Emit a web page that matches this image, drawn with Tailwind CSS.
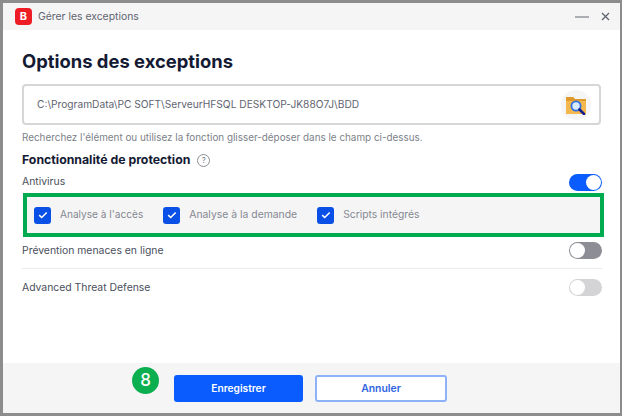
<!DOCTYPE html>
<html lang="fr">
<head>
  <meta charset="UTF-8">
  <title>Gérer les exceptions</title>
  <script src="https://cdn.jsdelivr.net/npm/@tailwindcss/browser@4"></script>
</head>
<body class="bg-white">
  <main class="w-[624px] h-[417px] pr-[2px] pb-px font-['Inter',sans-serif]">
    <div class="relative h-full flex flex-col border-[3px] border-r-2 border-[#8c8c8c] bg-white">

      <!-- title bar -->
      <div class="h-[27px] shrink-0 flex items-center bg-[#f5f5f5] pl-3 pr-[10px]">
        <div class="w-[17px] h-[17px] rounded-[4px] bg-[#ee1c25] flex items-center justify-center text-white text-[11px] font-bold leading-none">B</div>
        <span class="ml-[6px] text-[10.4px] text-[#5f6470]">Gérer les exceptions</span>
        <svg class="ml-auto" width="14" height="10" viewBox="0 0 14 10"><path d="M0 5h14" stroke="#7b7f88" stroke-width="1.2"/></svg>
        <svg class="ml-[12px]" width="9" height="9" viewBox="0 0 9 9"><path d="M1 1l7 7M8 1l-7 7" stroke="#5f6470" stroke-width="1.3"/></svg>
      </div>

      <!-- content -->
      <div class="flex-1 pl-[19px] pr-[18px] pt-[18px]">
        <h1 class="text-[18.4px] leading-[26px] font-bold text-[#141a33]">Options des exceptions</h1>

        <div class="mt-[10px] mr-px h-[41px] flex items-center justify-between border-2 border-[#d6d6d6] rounded-[4px] pl-[13px] pr-[8px]">
          <span class="text-[10.2px] text-[#5f6470]">C:\ProgramData\PC SOFT\ServeurHFSQL DESKTOP-JK88O7J\BDD</span>
          <div class="w-[30px] h-[30px] rounded-full bg-[#f5f5f5] flex items-center justify-center">
            <svg width="22" height="20" viewBox="0 0 22 20">
              <path d="M1 2h7l2 2h11v15H1z" fill="#f5b84c"/>
              <path d="M1 2h7l2 2h11v2H1z" fill="#e09a2c"/>
              <circle cx="11" cy="11" r="4.6" fill="#d8ecff" stroke="#2f6fe0" stroke-width="1.8"/>
              <path d="M14.5 14.5l4.5 4.5" stroke="#16208c" stroke-width="2.6" stroke-linecap="round"/>
            </svg>
          </div>
        </div>

        <p class="mt-[6px] text-[9.9px] leading-[13px] text-[#7b7f88] whitespace-nowrap">Recherchez l'élément ou utilisez la fonction glisser-déposer dans le champ ci-dessus.</p>

        <div class="mt-[9px] flex items-center gap-[7px]">
          <h2 class="text-[12.3px] leading-[14px] font-bold text-[#141a33]">Fonctionnalité de protection</h2>
          <div class="w-[13px] h-[13px] rounded-full border border-[#8c8f96] flex items-center justify-center text-[8px] leading-none text-[#7b7f88]">?</div>
        </div>

        <div class="mt-[6px] h-[18px] flex items-center justify-between">
          <span class="text-[10.4px] text-[#4a4f5c]">Antivirus</span>
          <div class="w-[33px] h-[17px] rounded-full bg-[#0a5cff] flex items-center justify-end pr-px">
            <div class="w-[15px] h-[15px] rounded-full bg-white"></div>
          </div>
        </div>

        <!-- annotated row -->
        <div class="mt-[2px] ml-px -mr-[2px] h-[44px] flex items-center gap-[20px] border-[4px] border-[#00ab4f] bg-[#f5f5f5] pl-[7px]">
          <label class="flex items-center gap-[9px]">
            <span class="w-[17px] h-[17px] rounded-[3px] bg-[#0a4fe6] flex items-center justify-center">
              <svg width="10" height="8" viewBox="0 0 10 8"><path d="M1.2 4.2l2.5 2.3 5-5" fill="none" stroke="white" stroke-width="1.6"/></svg>
            </span>
            <span class="text-[10.1px] text-[#858892]">Analyse à l'accès</span>
          </label>
          <label class="flex items-center gap-[9px]">
            <span class="w-[17px] h-[17px] rounded-[3px] bg-[#0a4fe6] flex items-center justify-center">
              <svg width="10" height="8" viewBox="0 0 10 8"><path d="M1.2 4.2l2.5 2.3 5-5" fill="none" stroke="white" stroke-width="1.6"/></svg>
            </span>
            <span class="text-[10.4px] text-[#858892]">Analyse à la demande</span>
          </label>
          <label class="flex items-center gap-[9px]">
            <span class="w-[17px] h-[17px] rounded-[3px] bg-[#0a4fe6] flex items-center justify-center">
              <svg width="10" height="8" viewBox="0 0 10 8"><path d="M1.2 4.2l2.5 2.3 5-5" fill="none" stroke="white" stroke-width="1.6"/></svg>
            </span>
            <span class="text-[10.3px] text-[#858892]">Scripts intégrés</span>
          </label>
        </div>

        <div class="h-[32px] pb-[4px] flex items-center justify-between border-b border-[#ececec]">
          <span class="text-[10.4px] text-[#4a4f5c]">Prévention menaces en ligne</span>
          <div class="w-[33px] h-[17px] rounded-full bg-[#8d8e95] flex items-center pl-px">
            <div class="w-[15px] h-[15px] rounded-full bg-white"></div>
          </div>
        </div>

        <div class="h-[37px] flex items-center justify-between">
          <span class="text-[10.4px] text-[#4a4f5c]">Advanced Threat Defense</span>
          <div class="w-[33px] h-[17px] rounded-full bg-[#d4d4d6] flex items-center pl-px">
            <div class="w-[15px] h-[15px] rounded-full bg-white"></div>
          </div>
        </div>
      </div>

      <!-- footer -->
      <div class="h-[50px] shrink-0 flex items-start gap-[12px] bg-[#f5f5f5] pt-[12px] pl-[171px]">
        <button class="w-[129px] h-[27px] rounded-[3px] bg-[#0a5cff] text-white text-[10.2px] font-semibold">Enregistrer</button>
        <button class="w-[132px] h-[27px] rounded-[3px] border-2 border-[#8db2f7] bg-white text-[#2f66e0] text-[10.4px] font-semibold">Annuler</button>
      </div>

      <!-- step badge -->
      <div class="absolute left-[129px] top-[364px] w-[27px] h-[27px] rounded-full bg-[#0caf50] flex items-center justify-center text-white text-[17px] font-medium leading-none">8</div>
    </div>
  </main>
</body>
</html>
